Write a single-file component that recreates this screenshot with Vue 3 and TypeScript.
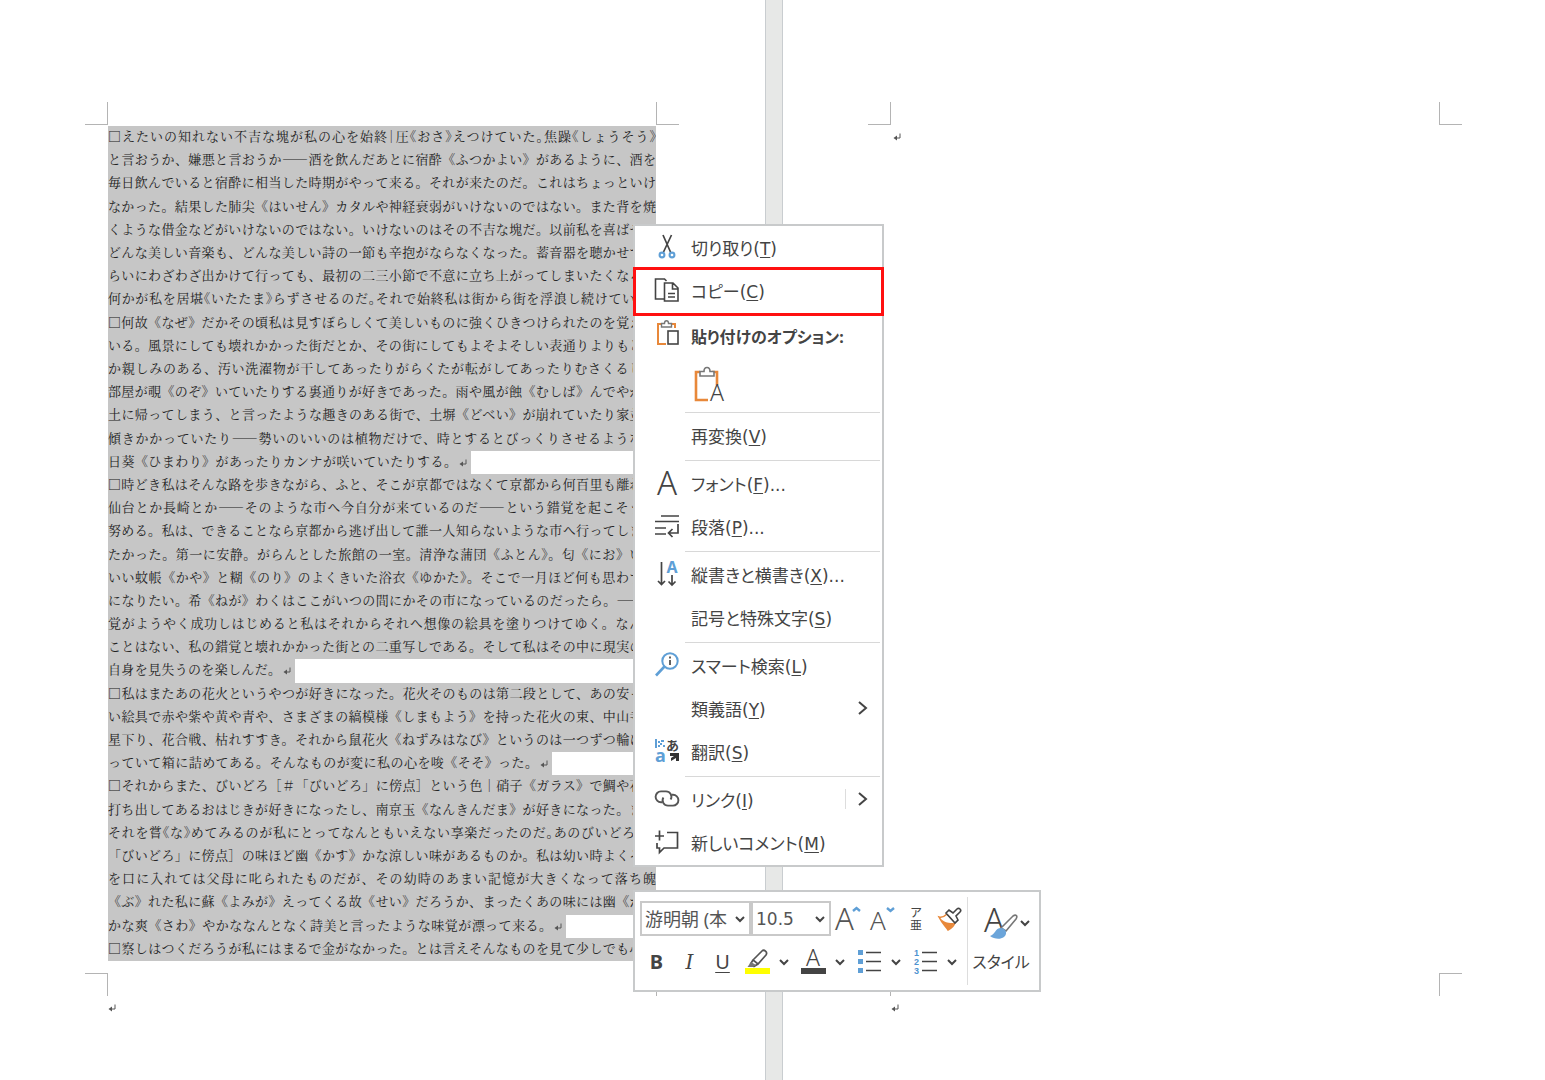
<script setup lang="ts">
interface Line {
  text: string
  /** Width of the selected run when the paragraph ends on this line. */
  end?: number
}

const lines: Line[] = [
  { text: '□えたいの知れない不吉な塊が私の心を始終｜圧《おさ》えつけていた。焦躁《しょうそう》' },
  { text: 'と言おうか、嫌悪と言おうか――酒を飲んだあとに宿酔《ふつかよい》があるように、酒を' },
  { text: '毎日飲んでいると宿酔に相当した時期がやって来る。それが来たのだ。これはちょっといけ' },
  { text: 'なかった。結果した肺尖《はいせん》カタルや神経衰弱がいけないのではない。また背を焼' },
  { text: 'くような借金などがいけないのではない。いけないのはその不吉な塊だ。以前私を喜ばせた' },
  { text: 'どんな美しい音楽も、どんな美しい詩の一節も辛抱がならなくなった。蓄音器を聴かせても' },
  { text: 'らいにわざわざ出かけて行っても、最初の二三小節で不意に立ち上がってしまいたくなる。' },
  { text: '何かが私を居堪《いたたま》らずさせるのだ。それで始終私は街から街を浮浪し続けていた。' },
  { text: '□何故《なぜ》だかその頃私は見すぼらしくて美しいものに強くひきつけられたのを覚えて' },
  { text: 'いる。風景にしても壊れかかった街だとか、その街にしてもよそよそしい表通りよりもどこ' },
  { text: 'か親しみのある、汚い洗濯物が干してあったりがらくたが転がしてあったりむさくるしい' },
  { text: '部屋が覗《のぞ》いていたりする裏通りが好きであった。雨や風が蝕《むしば》んでやがて' },
  { text: '土に帰ってしまう、と言ったような趣きのある街で、土塀《どべい》が崩れていたり家並が' },
  { text: '傾きかかっていたり――勢いのいいのは植物だけで、時とするとびっくりさせるような向' },
  { text: '日葵《ひまわり》があったりカンナが咲いていたりする。', end: 363 },
  { text: '□時どき私はそんな路を歩きながら、ふと、そこが京都ではなくて京都から何百里も離れた' },
  { text: '仙台とか長崎とか――そのような市へ今自分が来ているのだ――という錯覚を起こそうと' },
  { text: '努める。私は、できることなら京都から逃げ出して誰一人知らないような市へ行ってしまい' },
  { text: 'たかった。第一に安静。がらんとした旅館の一室。清浄な蒲団《ふとん》。匂《にお》いの' },
  { text: 'いい蚊帳《かや》と糊《のり》のよくきいた浴衣《ゆかた》。そこで一月ほど何も思わず横' },
  { text: 'になりたい。希《ねが》わくはここがいつの間にかその市になっているのだったら。――錯' },
  { text: '覚がようやく成功しはじめると私はそれからそれへ想像の絵具を塗りつけてゆく。なんの' },
  { text: 'ことはない、私の錯覚と壊れかかった街との二重写しである。そして私はその中に現実の私' },
  { text: '自身を見失うのを楽しんだ。', end: 187 },
  { text: '□私はまたあの花火というやつが好きになった。花火そのものは第二段として、あの安っぽ' },
  { text: 'い絵具で赤や紫や黄や青や、さまざまの縞模様《しまもよう》を持った花火の束、中山寺の' },
  { text: '星下り、花合戦、枯れすすき。それから鼠花火《ねずみはなび》というのは一つずつ輪にな' },
  { text: 'っていて箱に詰めてある。そんなものが変に私の心を唆《そそ》った。', end: 444 },
  { text: '□それからまた、びいどろ［＃「びいどろ」に傍点］という色｜硝子《ガラス》で鯛や花を' },
  { text: '打ち出してあるおはじきが好きになったし、南京玉《なんきんだま》が好きになった。また' },
  { text: 'それを嘗《な》めてみるのが私にとってなんともいえない享楽だったのだ。あのびいどろ［＃' },
  { text: '「びいどろ」に傍点］の味ほど幽《かす》かな涼しい味があるものか。私は幼い時よくそれ' },
  { text: 'を口に入れては父母に叱られたものだが、その幼時のあまい記憶が大きくなって落ち魄' },
  { text: '《ぶ》れた私に蘇《よみが》えってくる故《せい》だろうか、まったくあの味には幽《かす' },
  { text: 'かな爽《さわ》やかななんとなく詩美と言ったような味覚が漂って来る。', end: 458 },
  { text: '□察しはつくだろうが私にはまるで金がなかった。とは言えそんなものを見て少しでも心の' },
]

// Lines with more characters than the measure holds set their punctuation half-width.
const isTight = (l: Line) => !l.end && l.text.length >= 42

const runs = (text: string) => text.split(/(――)/).filter(Boolean)

interface Item {
  icon?: string
  label: string
  key: string
  tail?: string
  arrow?: boolean
  split?: boolean
  marked?: boolean
}

const editItems: Item[] = [
  { icon: 'cut', label: '切り取り', key: 'T' },
  { icon: 'copy', label: 'コピー', key: 'C', marked: true },
]

const groups: Item[][] = [
  [{ label: '再変換', key: 'V' }],
  [
    { icon: 'font', label: 'フォント', key: 'F', tail: '...' },
    { icon: 'para', label: '段落', key: 'P', tail: '...' },
  ],
  [
    { icon: 'direction', label: '縦書きと横書き', key: 'X', tail: '...' },
    { label: '記号と特殊文字', key: 'S' },
  ],
  [
    { icon: 'search', label: 'スマート検索', key: 'L' },
    { label: '類義語', key: 'Y', arrow: true },
    { icon: 'translate', label: '翻訳', key: 'S' },
  ],
  [
    { icon: 'link', label: 'リンク', key: 'I', arrow: true, split: true },
    { icon: 'comment', label: '新しいコメント', key: 'M' },
  ],
]
</script>

<template>
  <div class="workspace">
    <main class="page page-left">
      <div class="sheet">
        <div class="marks"><i class="crop tl"></i><i class="crop tr"></i></div>
        <div class="body">
          <div v-for="(l, i) in lines" :key="i" class="line" :class="{ tight: isTight(l) }">
            <template v-if="l.end">
              <span class="selected" :style="{ width: l.end + 'px' }">
                <span class="text">{{ l.text }}</span>
                <svg class="ret" viewBox="0 0 8 8"><path d="M7 .5V5H3" /><path class="head" d="M4 2.500V7.500L.5 5z" /></svg>
              </span>
              <span class="blank"></span>
            </template>
            <span v-else class="text"><span v-for="(r, j) in runs(l.text)" :key="j" :class="{ dash: r === '――' }">{{ r }}</span></span>
          </div>
        </div>
        <div class="marks"><i class="crop bl"></i><i class="crop br"></i></div>
        <div class="footer"><svg class="ret" viewBox="0 0 8 8"><path d="M7 .5V5H3" /><path class="head" d="M4 2.500V7.500L.5 5z" /></svg></div>
      </div>
    </main>
    <div class="gutter"></div>
    <section class="page page-right">
      <div class="sheet">
        <div class="marks"><i class="crop tl"></i><i class="crop tr"></i></div>
        <div class="body empty"><svg class="ret" viewBox="0 0 8 8"><path d="M7 .5V5H3" /><path class="head" d="M4 2.500V7.500L.5 5z" /></svg></div>
        <div class="marks"><i class="crop bl"></i><i class="crop br"></i></div>
        <div class="footer"><svg class="ret" viewBox="0 0 8 8"><path d="M7 .5V5H3" /><path class="head" d="M4 2.500V7.500L.5 5z" /></svg></div>
      </div>
    </section>

    <div class="menu">
      <button v-for="it in editItems" :key="it.label" type="button" class="item" :class="{ marked: it.marked }">
        <svg v-if="it.icon === 'cut'" class="icon" viewBox="0 0 26 26">
          <path d="M9 1L16.500 18M17.500 1L9.500 18" stroke="#444" stroke-width="1.700" fill="none" />
          <circle cx="8" cy="21" r="2.400" fill="#fff" stroke="#5f9fd6" stroke-width="2.100" />
          <circle cx="18" cy="21" r="2.400" fill="#fff" stroke="#5f9fd6" stroke-width="2.100" />
        </svg>
        <svg v-else class="icon" viewBox="0 0 26 26" fill="none" stroke="#444" stroke-width="1.600">
          <path d="M10 22H1.500V2h9l2 2" />
          <path d="M10.500 6h8.500l5 5v13H10.500zM18.500 6v6H24M14 16.500h7M14 20h7" />
        </svg>
        <span class="label">{{ it.label }}(<u>{{ it.key }}</u>)</span>
      </button>

      <div class="heading">
        <svg class="icon" viewBox="0 0 26 26" fill="none">
          <path d="M8 4H4v20h8M17 4h4v4" stroke="#e8883a" stroke-width="2" />
          <path d="M7.500 7V3.500h3C10.500 1.500 11 .8 12.500.8S14.500 1.500 14.500 3.500h3V7z" stroke="#777" stroke-width="1.400" fill="#fff" />
          <rect x="14" y="11" width="10" height="13" stroke="#444" stroke-width="1.600" fill="#fff" />
        </svg>
        <strong>貼り付けのオプション:</strong>
      </div>
      <div class="paste-row">
        <button type="button" class="paste" aria-label="テキストのみ保持">
          <svg width="34" height="38" viewBox="0 0 34 38" fill="none">
            <path d="M8 6H4v28h12M20 6h5v13" stroke="#e8883a" stroke-width="2.600" />
            <path d="M8 10V5.500h4C12 2.500 13 1.500 15 1.500s3 1 3 4h4V10z" stroke="#777" stroke-width="1.600" fill="#fff" />
            <text x="18" y="35" font-size="23" fill="#444">A</text>
          </svg>
        </button>
      </div>

      <template v-for="(g, gi) in groups" :key="gi">
        <hr />
        <button v-for="it in g" :key="it.label" type="button" class="item">
          <svg v-if="it.icon === 'font'" class="icon" viewBox="0 0 26 26">
            <text x="13" y="25" text-anchor="middle" font-size="33" fill="#444">A</text>
          </svg>
          <svg v-else-if="it.icon === 'para'" class="icon" viewBox="0 0 26 26" fill="none" stroke="#444" stroke-width="1.700">
            <path d="M7 3h18M1 8.500h24M1 15h11M1 21h11" />
            <path d="M24 11v9H15M18.500 16l-4 4 4 4" />
          </svg>
          <svg v-else-if="it.icon === 'direction'" class="icon" viewBox="0 0 26 26" fill="none" stroke="#444" stroke-width="1.700">
            <path d="M7.500 1v22M4 20l3.500 3.500L11 20M18 14v9.500M14.500 20.500L18 24l3.500-3.500" />
            <text class="solid" x="18" y="12" text-anchor="middle" font-size="16" fill="#5f9fd6" stroke="none">A</text>
          </svg>
          <svg v-else-if="it.icon === 'search'" class="icon" viewBox="0 0 26 26" fill="none">
            <circle cx="16" cy="9" r="7.700" stroke="#5f9fd6" stroke-width="2" />
            <path d="M10.500 14.500L2 23.500" stroke="#5f9fd6" stroke-width="2.600" />
            <path d="M16 8v5M16 4.500v2" stroke="#444" stroke-width="1.700" />
          </svg>
          <svg v-else-if="it.icon === 'translate'" class="icon" viewBox="0 0 26 26">
            <text class="solid" x="1" y="24" font-size="18" fill="#5f9fd6">a</text>
            <text class="solid" x="12" y="12" font-size="13" fill="#444">あ</text>
            <path d="M1 1h2v9H1zM4 3h2v2H4zM7 2h3v2H7zM4 7h2v2H4zM6 5h2v2H6zM9 7h2v2H9z" fill="#5f9fd6" />
            <path d="M16 15h9v8h-3v-3l-5 3v-3l3-2h-4z" fill="#333" />
          </svg>
          <svg v-else-if="it.icon === 'link'" class="icon" viewBox="0 0 26 26" fill="none" stroke="#555" stroke-width="1.900">
            <path d="M8.500 16.200H7a5.400 5.400 0 0 1 0-10.800h5a5.400 5.400 0 0 1 4.600 8.200" />
            <path d="M17.500 8.800H19a5.400 5.400 0 0 1 0 10.800h-5a5.400 5.400 0 0 1-4.600-8.200" />
          </svg>
          <svg v-else-if="it.icon === 'comment'" class="icon" viewBox="0 0 26 26" fill="none" stroke="#444" stroke-width="1.700">
            <path d="M13 3.500h10.500v15.500H10l-4.500 4.500V19H3v-5M1 7h9M5.500 1.500v10" />
          </svg>
          <span v-else class="icon"></span>
          <span class="label">{{ it.label }}(<u>{{ it.key }}</u>){{ it.tail }}</span>
          <i v-if="it.split" class="split"></i>
          <svg v-if="it.arrow" class="arrow" viewBox="0 0 12 16"><path d="M2 2l7 6-7 6" /></svg>
        </button>
      </template>
    </div>

    <div class="toolbar">
      <div class="tools">
        <div class="tool-row">
          <label class="picker family">
            <select aria-label="フォント"><option>游明朝 (本文)</option></select>
            <svg class="chev" viewBox="0 0 10 8"><path d="M1 2l4 4 4-4" /></svg>
          </label>
          <label class="picker size">
            <select aria-label="フォント サイズ"><option>10.5</option></select>
            <svg class="chev" viewBox="0 0 10 8"><path d="M1 2l4 4 4-4" /></svg>
          </label>
          <button type="button" class="tool" aria-label="フォント サイズの拡大">
            <svg width="30" height="30" viewBox="0 0 30 30" fill="none">
              <text x="2" y="26" font-size="31" fill="#555">A</text>
              <path d="M20 7l3.500-3L27 7" stroke="#5f9fd6" stroke-width="2.400" />
            </svg>
          </button>
          <button type="button" class="tool" aria-label="フォント サイズの縮小">
            <svg width="30" height="30" viewBox="0 0 30 30" fill="none">
              <text x="3" y="26" font-size="26" fill="#555">A</text>
              <path d="M20 4l3.500 3L27 4" stroke="#5f9fd6" stroke-width="2.400" />
            </svg>
          </button>
          <button type="button" class="tool ruby"><span>ア</span><span>亜</span></button>
          <button type="button" class="tool" aria-label="書式のコピー">
            <svg width="26" height="26" viewBox="0 0 26 26" fill="none" stroke-width="1.600">
              <path d="M2 11c4 1 6-1 8-3l8 8c-1 4-3 6-7 8-2-4-5-5-9-13z" fill="#fff" stroke="#e8883a" />
              <path d="M4 13c4 4 8 4 13 4-1 3-3 5-6 7-2-4-5-5-7-11z" fill="#e8883a" />
              <path d="M9 7l3-3 4 3 4-4c2-2 5 1 3 3l-4 4 2 4-3 3z" fill="#fff" stroke="#444" />
            </svg>
          </button>
        </div>
        <div class="tool-row second">
          <button type="button" class="fmt bold">B</button>
          <button type="button" class="fmt italic">I</button>
          <button type="button" class="fmt under">U</button>
          <button type="button" class="drop" aria-label="蛍光ペンの色">
            <svg width="36" height="28" viewBox="0 0 36 28" fill="none">
              <path d="M14 12L23 3c2-2 6 1 4 4L19 16zM14 12l-2.500 4 3.500 2.500L19 16" stroke="#555" stroke-width="1.700" />
              <path d="M12 14l5 3-3 2H8.500z" fill="#777" />
              <rect x="6" y="20" width="25" height="6" fill="#ffff00" />
            </svg>
            <svg class="chev" viewBox="0 0 10 8"><path d="M1 2l4 4 4-4" /></svg>
          </button>
          <button type="button" class="drop" aria-label="フォントの色">
            <svg width="36" height="28" viewBox="0 0 36 28">
              <text x="18" y="18" text-anchor="middle" font-size="23" fill="#444">A</text>
              <rect x="6" y="20" width="25" height="6" fill="#444" />
            </svg>
            <svg class="chev" viewBox="0 0 10 8"><path d="M1 2l4 4 4-4" /></svg>
          </button>
          <button type="button" class="drop" aria-label="箇条書き">
            <svg width="36" height="28" viewBox="0 0 36 28">
              <path d="M7 2h5v5H7zM7 11h5v5H7zM7 20h5v5H7z" fill="#5f9fd6" />
              <path d="M15 4.500h15M15 13.500h15M15 22.500h15" stroke="#444" stroke-width="1.600" />
            </svg>
            <svg class="chev" viewBox="0 0 10 8"><path d="M1 2l4 4 4-4" /></svg>
          </button>
          <button type="button" class="drop" aria-label="段落番号">
            <svg width="36" height="28" viewBox="0 0 36 28">
              <g class="digits" font-size="9" fill="#4f93d0">
                <text x="7" y="8">1</text><text x="7" y="17">2</text><text x="7" y="26">3</text>
              </g>
              <path d="M15 4.500h15M15 13.500h15M15 22.500h15" stroke="#444" stroke-width="1.600" />
            </svg>
            <svg class="chev" viewBox="0 0 10 8"><path d="M1 2l4 4 4-4" /></svg>
          </button>
        </div>
      </div>
      <button type="button" class="styles">
        <span class="style-icon">
          <svg width="36" height="36" viewBox="0 0 36 36" fill="none">
            <text x="0" y="27" font-size="33" fill="#444">A</text>
            <path d="M17 23L29 11c3-2 5 0 3 3L22 26z" fill="#fff" stroke="#777" stroke-width="1.600" />
            <path d="M6 31c5-1 5-8 11-8 5 0 7 6 3 9-4 3-10 2-14-1z" fill="#6ba5da" />
          </svg>
          <svg class="chev" viewBox="0 0 10 8"><path d="M1 2l4 4 4-4" /></svg>
        </span>
        <span>スタイル</span>
      </button>
    </div>
  </div>
</template>

<style>
body {
  margin: 0;
  background: #fff;
}
</style>

<style scoped>
.workspace {
  position: relative;
  display: flex;
  min-height: 100vh;
  overflow: hidden;
  font-family: 'Noto Sans', 'Noto Sans CJK JP', sans-serif;
  color: #444;
}
.page {
  box-sizing: border-box;
  padding-top: 102px;
}
.page-left {
  flex: 0 0 765px;
  padding-left: 85px;
}
.page-right {
  flex: 1;
  padding-left: 85px;
}
.gutter {
  flex: 0 0 16px;
  background: #e7e8e7;
  border: solid #c9cdd0;
  border-width: 0 1px;
}
.sheet {
  width: 594px;
}
.marks {
  display: flex;
  justify-content: space-between;
}
.crop {
  box-sizing: border-box;
  width: 23px;
  height: 23px;
  border: 0 solid #b4b4b4;
}
.tl { border-width: 0 1px 1px 0; }
.tr { border-width: 0 0 1px 1px; }
.bl { border-width: 1px 1px 0 0; }
.br { border-width: 1px 0 0 1px; }
.body {
  display: grid;
  grid-auto-rows: 1fr;
  min-height: 835px;
  margin: 1px 23px 12px;
  background: #c6c6c6;
  font-family: 'Noto Serif CJK JP', 'Noto Serif JP', 'Noto Sans CJK JP', serif;
  font-size: 13px;
  line-height: 20px;
  color: #222;
}
.body.empty {
  display: flex;
  align-items: flex-start;
  background: none;
}
.body.empty .ret {
  margin-top: 7px;
}
.line {
  display: flex;
  overflow: hidden;
  white-space: nowrap;
}
.text {
  flex: 1;
  text-align: justify;
  text-align-last: justify;
}
.tight .text {
  font-feature-settings: 'halt';
}
.dash {
  font-weight: 700;
}
.selected {
  display: flex;
}
.blank {
  flex: 1;
  background: #fff;
}
.ret {
  display: block;
  width: 8px;
  height: 8px;
  margin: 8px 4px 0 2px;
  fill: none;
  stroke: #555;
  stroke-width: 1;
}
.head {
  fill: #555;
  stroke: none;
}
.footer {
  padding: 0 21px;
}

svg text {
  font-weight: 300;
}
svg .solid {
  font-weight: 700;
}
svg .digits text {
  font-family: 'Liberation Sans', sans-serif;
  font-weight: 700;
}
button {
  padding: 0;
  border: 0;
  background: none;
  font: inherit;
  color: inherit;
}
.menu {
  position: absolute;
  top: 224px;
  left: 633px;
  box-sizing: border-box;
  width: 251px;
  padding: 1px 1px 0;
  background: #fff;
  border: 2px solid #c8cacb;
  font-size: 17px;
}
.item,
.heading {
  box-sizing: border-box;
  display: flex;
  align-items: center;
  gap: 11px;
  width: 100%;
  height: 43px;
  padding: 0 12px 3px 18px;
  font-feature-settings: 'palt';
  white-space: nowrap;
}
.item u {
  text-decoration-thickness: 1px;
  text-underline-offset: 2px;
}
.marked {
  outline: 3px solid #ff1010;
}
.heading {
  height: 46px;
  padding-bottom: 0;
  font-size: 16px;
}
.icon {
  flex: 0 0 26px;
  height: 26px;
  overflow: visible;
}
.heading .icon {
  margin-bottom: 6px;
}
.label {
  flex: 1;
  font-family: 'DejaVu Sans', 'Noto Sans CJK JP', sans-serif;
  text-align: left;
}
.arrow {
  width: 12px;
  height: 16px;
  fill: none;
  stroke: #444;
  stroke-width: 2;
}
.split {
  width: 1px;
  height: 20px;
  background: #ddd;
}
.paste-row {
  display: flex;
  align-items: center;
  height: 51px;
  padding-left: 56px;
}
.paste svg {
  display: block;
}
.menu hr {
  height: 1px;
  margin: 2px 1px 2px 49px;
  border: 0;
  background: #d8d8d8;
}

.toolbar {
  position: absolute;
  top: 890px;
  left: 633px;
  box-sizing: border-box;
  display: flex;
  width: 408px;
  height: 102px;
  padding: 5px;
  background: #fff;
  border: 2px solid #c8cacb;
}
.toolbar svg {
  overflow: visible;
}
.tools {
  width: 327px;
  border-right: 1px solid #ddd;
}
.tool-row {
  display: flex;
  align-items: center;
  height: 43px;
}
.second {
  height: 44px;
}
.picker {
  position: relative;
  box-sizing: border-box;
  height: 35px;
  border: 2px solid #c9c9c9;
}
.family { width: 111px; }
.size { width: 80px; }
.picker select {
  width: 100%;
  height: 100%;
  padding: 0 22px 0 3px;
  border: 0;
  appearance: none;
  background: none;
  font: inherit;
  font-size: 18px;
  color: #555;
}
.size select {
  font-family: 'DejaVu Sans', sans-serif;
  font-size: 17px;
}
.picker .chev {
  position: absolute;
  right: 4px;
  top: 12px;
}
.chev {
  flex: none;
  width: 10px;
  height: 8px;
  fill: none;
  stroke: #444;
  stroke-width: 2;
}
.tool {
  display: flex;
  justify-content: center;
  align-items: center;
  width: 34px;
  height: 34px;
}
.ruby {
  flex-direction: column;
  font-size: 12px;
  line-height: 13px;
}
.fmt {
  width: 33px;
  height: 34px;
  font-size: 20px;
  line-height: 34px;
}
.bold { font-weight: 700; }
.italic {
  font-family: 'DejaVu Serif', serif;
  font-style: italic;
}
.under {
  text-decoration: underline;
  text-decoration-thickness: 1px;
  text-underline-offset: 3px;
}
.drop {
  display: flex;
  align-items: center;
  width: 56px;
  height: 34px;
  gap: 4px;
}
.styles {
  display: flex;
  flex: 1;
  flex-direction: column;
  align-items: center;
  font-size: 16px;
  font-feature-settings: 'palt';
  white-space: nowrap;
}
.style-icon {
  display: flex;
  align-items: center;
  height: 52px;
  padding-left: 12px;
}
</style>
